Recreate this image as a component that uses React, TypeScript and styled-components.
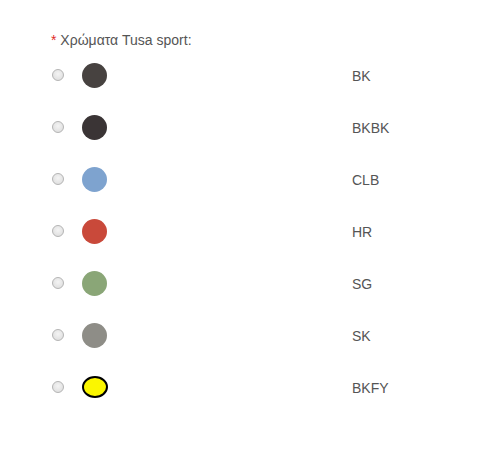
import React from "react";
import styled, { createGlobalStyle } from "styled-components";

const GlobalStyle = createGlobalStyle`
  body {
    margin: 0;
    background: #fff;
    font-family: "Liberation Sans", Arial, sans-serif;
  }
`;

const colours = [
  { code: "BK", color: "#474240" },
  { code: "BKBK", color: "#3a3435" },
  { code: "CLB", color: "#7ea3cf" },
  { code: "HR", color: "#c9493a" },
  { code: "SG", color: "#8aa677" },
  { code: "SK", color: "#8e8d87" },
  { code: "BKFY", color: "#fbf600", outlined: true },
];

export default function App() {
  return (
    <>
      <GlobalStyle />
      <StyledWrapper>
        <Label>
          <Required>*</Required> Χρώματα Tusa sport:
        </Label>
        <Options>
          {colours.map((c) => (
            <Option key={c.code}>
              <Radio />
              <Swatch $color={c.color} $outlined={c.outlined} />
              <Code>{c.code}</Code>
            </Option>
          ))}
        </Options>
      </StyledWrapper>
    </>
  );
}

const StyledWrapper = styled.div`
  padding: 32px 0 0 51px;
  width: 486px;
  height: 466px;
  box-sizing: border-box;
`;

const Label = styled.div`
  font-size: 14px;
  color: #555;
  line-height: 16px;
`;

const Required = styled.span`
  color: #e02b27;
`;

const Options = styled.div`
  margin-top: 1px;
  display: flex;
  flex-direction: column;
`;

const Option = styled.label`
  display: grid;
  grid-template-columns: 13px 252px auto;
  column-gap: 18px;
  align-items: center;
  height: 52px;
`;

const Radio = styled.span`
  width: 12px;
  height: 12px;
  border-radius: 50%;
  box-sizing: border-box;
  border: 1px solid #b4b4b4;
  background: radial-gradient(circle at 50% 40%, #f4f4f4 0%, #dadada 100%);
  margin-left: 1px;
`;

const Swatch = styled.span<{ $color: string; $outlined?: boolean }>`
  width: ${(p) => (p.$outlined ? "26px" : "25px")};
  height: ${(p) => (p.$outlined ? "22px" : "25px")};
  border-radius: 50%;
  box-sizing: border-box;
  background: ${(p) => p.$color};
  border: ${(p) => (p.$outlined ? "2px solid #000" : "none")};
`;

const Code = styled.span`
  font-size: 14px;
  color: #555;
  margin-top: 2px;
`;
